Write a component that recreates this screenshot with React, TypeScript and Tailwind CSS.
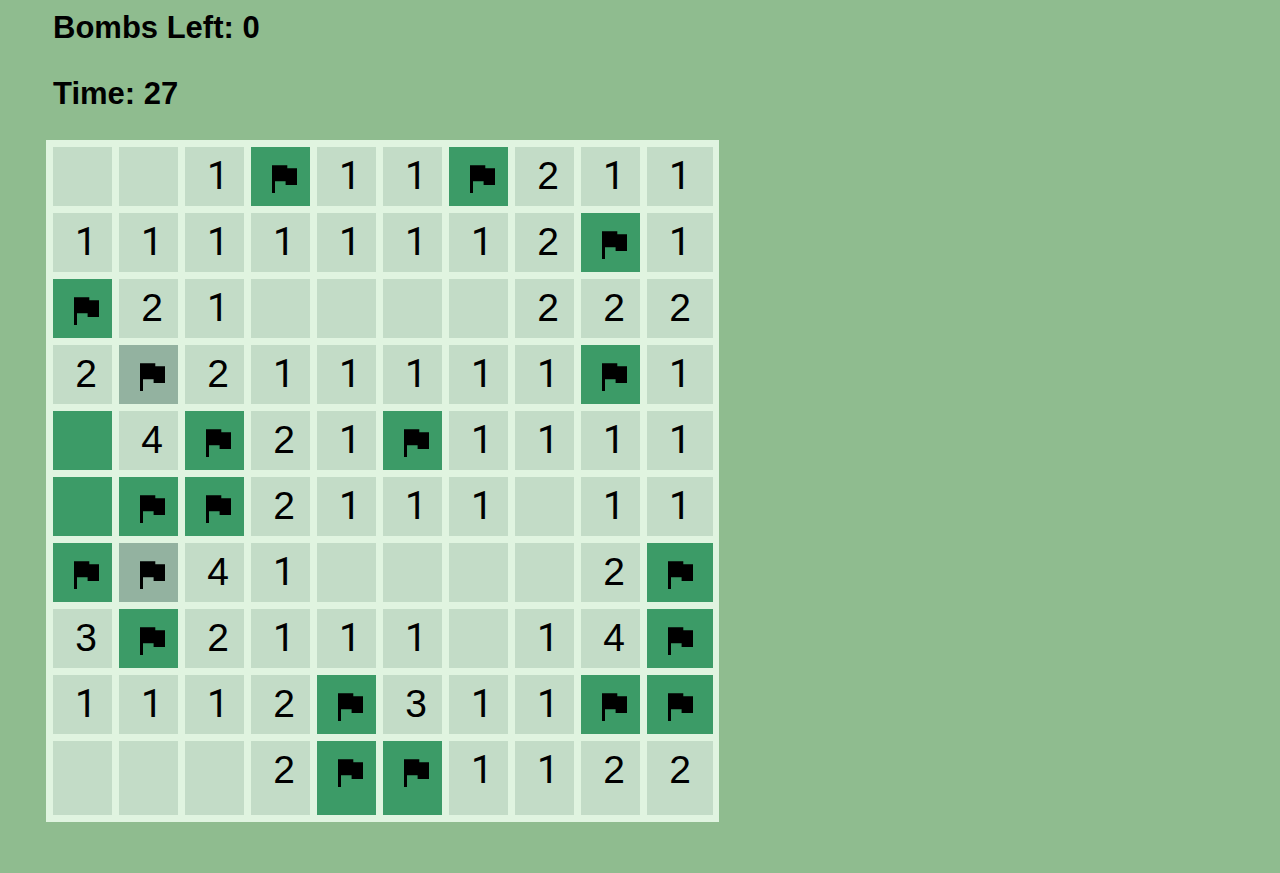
import clsx from "clsx";

// "." opened and empty, digit = neighbouring bombs, "F" flag,
// "#" not opened yet, "x" greyed flag
const board = [
  "..1F11F211",
  "11111112F1",
  "F21....222",
  "2x211111F1",
  "#4F21F1111",
  "#FF2111.11",
  "Fx41....2F",
  "3F2111.14F",
  "1112F311FF",
  "...2FF1122",
];

const Flag = () => (
  <svg
    viewBox="0 0 26 28"
    className="mt-[18px] h-[28px] w-[26px] shrink-0"
    fill="currentColor"
    aria-hidden="true"
  >
    <path d="M1 0.3H16.3V3.3H26V20H14.6V16.3H4V28H1Z" />
  </svg>
);

const label = (cell: string) => {
  if (cell === ".") return "Empty";
  if (cell === "#") return "Hidden";
  if (cell === "F" || cell === "x") return "Flag";
  return cell;
};

const Cell = ({ cell, last }: { cell: string; last: boolean }) => {
  const flagged = cell === "F" || cell === "x";
  const isNumber = /\d/.test(cell);

  return (
    <button
      type="button"
      aria-label={label(cell)}
      className={clsx(
        "flex items-start justify-center text-[39px] leading-[58px] text-black",
        !last && "pl-[7px]",
        cell === "F" || cell === "#"
          ? "bg-[#3c9b67]"
          : cell === "x"
            ? "bg-[#93b2a0]"
            : "bg-[#c3dcc7]",
        cell === "1" && "font-['Roboto',sans-serif]"
      )}
    >
      {flagged && <Flag />}
      {isNumber && cell}
    </button>
  );
};

export default function App() {
  return (
    <main className="min-h-screen bg-[#8fbc8f] pb-12 font-['Liberation_Sans',Arial,sans-serif] text-black">
      <header className="flex flex-col gap-2.5 pl-[53px] text-[31px] leading-[56px] font-bold">
        <h2>Bombs Left: 0</h2>
        <h2>Time: 27</h2>
      </header>

      <section className="mt-[18px] ml-[46px] w-fit bg-[#e0f4e0] py-[7px] pr-1.5 pl-[7px]">
        <div className="grid grid-cols-[repeat(9,59px)_66px] grid-rows-[repeat(9,59px)_74px] gap-[7px]">
          {board.map((row, y) =>
            row
              .split("")
              .map((cell, x) => (
                <Cell key={`${x}-${y}`} cell={cell} last={x === row.length - 1} />
              ))
          )}
        </div>
      </section>
    </main>
  );
}
